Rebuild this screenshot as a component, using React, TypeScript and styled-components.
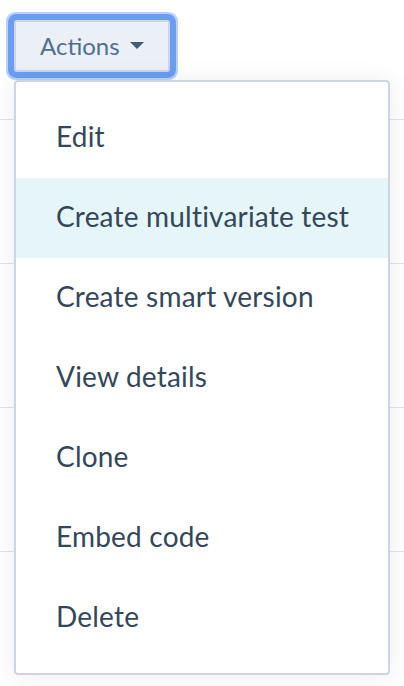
import styled, { createGlobalStyle } from "styled-components";

const GlobalStyle = createGlobalStyle`
  html, body {
    margin: 0;
    padding: 0;
    background: #ffffff;
    font-family: Lato, "Noto Sans", sans-serif;
  }
`;

const items = [
  "Edit",
  "Create multivariate test",
  "Create smart version",
  "View details",
  "Clone",
  "Embed code",
  "Delete",
];

export default function App() {
  return (
    <>
      <GlobalStyle />
      <Page>
        <Row $first>
          <DropdownWrap>
            <ActionsButton>
              Actions
              <Caret viewBox="0 0 14 8">
                <path d="M0 0 L14 0 L7 7 Z" fill="#425b76" />
              </Caret>
            </ActionsButton>
            <Menu>
              {items.map((label, i) => (
                <MenuItem key={label} $active={i === 1}>
                  {label}
                </MenuItem>
              ))}
            </Menu>
          </DropdownWrap>
        </Row>
        <Row />
        <Row />
        <Row />
        <Row $last />
      </Page>
    </>
  );
}

const Page = styled.div`
  width: 404px;
  height: 686px;
  overflow: hidden;
  background: #ffffff;
`;

const Row = styled.div<{ $first?: boolean; $last?: boolean }>`
  height: ${(p) => (p.$first ? "119px" : "143px")};
  border-bottom: ${(p) => (p.$last ? "none" : "1px solid #dfe3eb")};
`;

const DropdownWrap = styled.div`
  position: relative;
  display: inline-block;
  margin: 20px 0 0 14px;
`;

const ActionsButton = styled.button`
  display: flex;
  align-items: center;
  gap: 10px;
  box-sizing: border-box;
  height: 52px;
  width: 156px;
  padding: 0 0 2px 24px;
  border: 2px solid #cbd6e2;
  border-radius: 3px;
  background: #eaf0f6;
  color: #516f90;
  font-family: Lato, "Noto Sans", sans-serif;
  font-size: 24px;
  box-shadow: 0 0 0 6px #6a9ef2, 0 0 0 8px #b9d2fa;
  cursor: pointer;
`;

const Caret = styled.svg`
  width: 14px;
  height: 8px;
  margin-top: 2px;
`;

const Menu = styled.ul`
  position: absolute;
  top: 60px;
  left: 0;
  width: 376px;
  box-sizing: border-box;
  margin: 0;
  padding: 16px 0 15px;
  list-style: none;
  background: #ffffff;
  border: 2px solid #cbd6e2;
  border-radius: 4px;
  box-shadow: 0 1px 24px rgba(0, 0, 0, 0.08);
`;

const MenuItem = styled.li<{ $active?: boolean }>`
  display: flex;
  align-items: center;
  box-sizing: border-box;
  height: 80px;
  padding: 0 40px 4px;
  background: ${(p) => (p.$active ? "#e5f5f8" : "transparent")};
  color: #33475b;
  font-size: 28px;
  letter-spacing: 0.2px;
  white-space: nowrap;
`;
